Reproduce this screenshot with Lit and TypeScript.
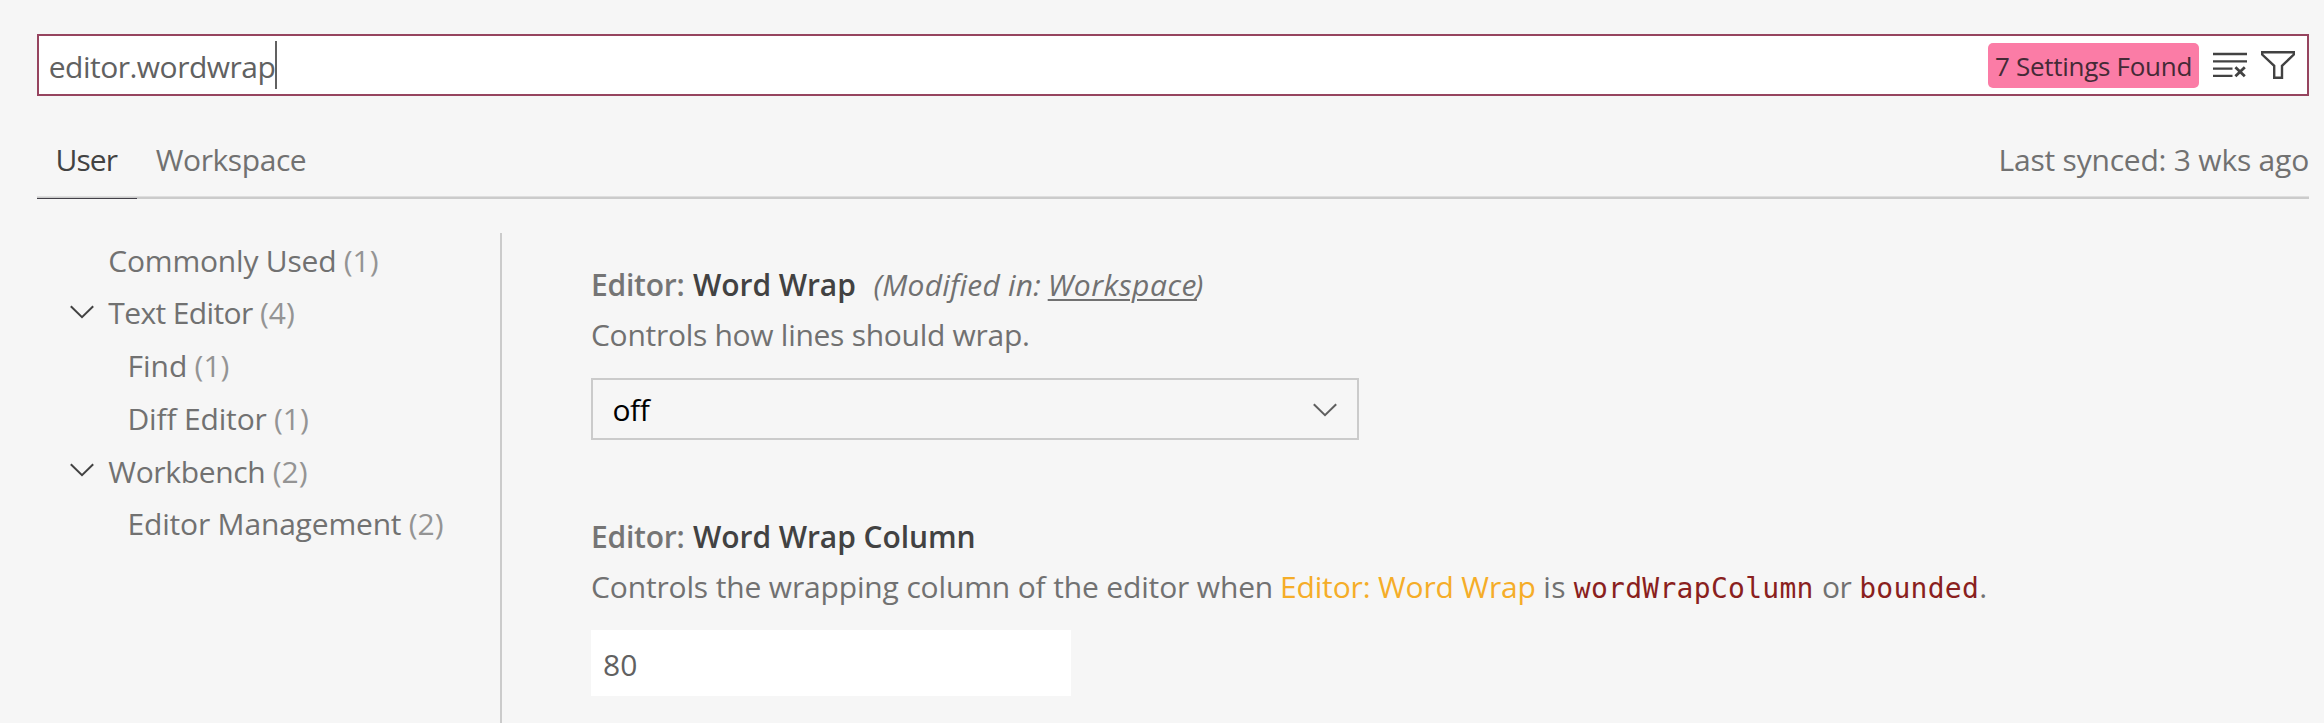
import { LitElement, html, css } from 'lit';
import { customElement, property } from 'lit/decorators.js';

interface TreeNode {
  label: string;
  count: number;
  level: number;
  expanded?: boolean;
  tracking: number;
}

const TREE: TreeNode[] = [
  { label: 'Commonly Used', count: 1, level: 0, tracking: -0.2 },
  { label: 'Text Editor', count: 4, level: 0, expanded: true, tracking: -0.62 },
  { label: 'Find', count: 1, level: 1, tracking: 0 },
  { label: 'Diff Editor', count: 1, level: 1, tracking: -0.16 },
  { label: 'Workbench', count: 2, level: 0, expanded: true, tracking: -0.34 },
  { label: 'Editor Management', count: 2, level: 1, tracking: -0.18 },
];

const chevron = html`<svg class="chevron" width="24" height="14" viewBox="0 0 24 14" fill="none">
  <path d="M0.8 1.2 L12 12.2 L23.2 1.2" stroke="currentColor" stroke-width="2" />
</svg>`;

@customElement('settings-search')
export class SettingsSearch extends LitElement {
  @property() query = '';
  @property({ type: Number }) found = 0;

  static styles = css`
    :host { display: block; }
    .box {
      display: flex;
      align-items: center;
      box-sizing: border-box;
      height: 62px;
      border: 2px solid #96445f;
      background: #fff;
      padding: 0 12px 0 9.7px;
    }
    .query { color: #616161; letter-spacing: -0.5px; padding-top: 4px; line-height: 54px; }
    .caret { width: 2px; height: 48px; background: #616161; margin-left: -0.8px; }
    .badge {
      margin-left: auto;
      box-sizing: border-box;
      width: 211px;
      height: 45px;
      padding-left: 7px;
      border-radius: 5px;
      background: #fb7ca6;
      color: #452a36;
      font-size: 26px;
      line-height: 47px;
      letter-spacing: -0.29px;
      white-space: nowrap;
    }
    .clear { margin-left: 14px; }
    .filter { margin-left: 14px; }
    svg { display: block; color: #424242; flex: none; }
  `;

  render() {
    return html`<div class="box">
      <span class="query">${this.query}</span><span class="caret"></span>
      <span class="badge">${this.found} Settings Found</span>
      <svg class="clear" width="34" height="26" viewBox="0 0 34 26" fill="none" stroke="currentColor" stroke-width="2.4">
        <path d="M0 2H34M0 9.4H34M0 16.6H19.5M0 23.9H19.5" />
        <path d="M22.4 15.2L31.8 24.2M31.8 15.2L22.4 24.2" stroke-width="2.8" />
      </svg>
      <svg class="filter" width="34" height="28" viewBox="0 0 34 28" fill="none" stroke="currentColor" stroke-width="2.4">
        <path d="M1.2 1.2H32.8V3.6L21 14.8V26.8H13.2V14.8L1.2 3.6Z" />
      </svg>
    </div>`;
  }
}

@customElement('settings-toc')
export class SettingsToc extends LitElement {
  static styles = css`
    :host { display: block; }
    .row { display: flex; height: 52.7px; line-height: 52.7px; white-space: nowrap; color: #717171; }
    .twistie { width: 38.3px; flex: none; display: flex; align-items: center; color: #424242; }
    .twistie svg { margin-top: -3px; }
    .indent { width: 19.2px; flex: none; }
    .count { color: #949494; margin-left: 7.3px; }
  `;

  render() {
    return TREE.map(
      (n) => html`<div class="row">
        <span class="twistie">${n.expanded ? chevron : ''}</span>
        ${n.level ? html`<span class="indent"></span>` : ''}
        <span style="letter-spacing:${n.tracking}px">${n.label}</span>
        <span class="count">(${n.count})</span>
      </div>`,
    );
  }
}

@customElement('app-root')
export class AppRoot extends LitElement {
  static styles = css`
    :host {
      display: block;
      box-sizing: border-box;
      height: 723px;
      overflow: hidden;
      background: #f6f6f6;
      color: #717171;
      font: 30px 'Open Sans', 'Noto Sans', sans-serif;
      padding: 34px 15px 0 37px;
    }
    .tabs {
      display: flex;
      box-sizing: border-box;
      height: 83px;
      margin-top: 20px;
      line-height: 50px;
      border-bottom: 2px solid #cbcbcb;
      box-shadow: inset 0 -1px #dedede;
    }
    .tab { box-sizing: border-box; height: 83px; padding-top: 19px; white-space: nowrap; }
    .user { width: 100px; padding-left: 18.5px; color: #424242; letter-spacing: -0.9px; border-bottom: 1px solid #424048; }
    .workspace { padding-left: 18.8px; letter-spacing: -0.43px; }
    .synced { margin-left: auto; padding-right: 0; letter-spacing: -0.21px; }
    .body { display: flex; margin-top: 34px; height: 490px; }
    .toc { width: 430px; flex: none; padding: 1.8px 0 0 33px; border-right: 2px solid #cbcbcb; }
    .settings { padding: 27px 0 0 89px; }
    .setting { height: 252px; }
    .line { display: flex; align-items: baseline; height: 50px; line-height: 50px; white-space: pre; }
    .category { font-weight: 600; width: 102px; color: #757575; letter-spacing: -0.22px; }
    .name { font-weight: 600; color: #424242; letter-spacing: -0.08px; }
    .name-short { width: 180.5px; }
    .modified { font-style: italic; width: 174.2px; letter-spacing: 0.21px; }
    .scope { font-style: italic; letter-spacing: 0.5px; width: 147px; text-decoration: underline; text-decoration-thickness: 2px; text-underline-offset: 3px; }
    .paren { font-style: italic; }
    .short { letter-spacing: -0.28px; }
    .lead { width: 689px; letter-spacing: -0.15px; }
    .link { color: #f5ad28; width: 263.2px; letter-spacing: -0.16px; }
    .is { width: 30.6px; letter-spacing: 0.4px; }
    .or { width: 37.2px; letter-spacing: -0.5px; }
    .code { font-family: 'DejaVu Sans Mono', monospace; font-size: 28px; line-height: 40px; color: #8a1f20; letter-spacing: 0.28px; }
    .code-a { width: 248.2px; }
    .code-b { width: 120px; }
    .select {
      display: flex;
      align-items: center;
      justify-content: space-between;
      box-sizing: border-box;
      width: 768px;
      height: 62px;
      margin-top: 17.5px;
      padding: 0 20px 0 19.5px;
      border: 2px solid #cbcbcb;
      color: #000;
      letter-spacing: -0.5px;
    }
    .select svg { color: #5f5f5f; margin-top: 2px; }
    .select .value { padding-top: 2px; }
    .number { box-sizing: border-box; width: 480px; height: 66px; margin-top: 17.5px; padding: 2px 0 0 12px; line-height: 65px; background: #fff; color: #616161; }
  `;

  render() {
    return html`
      <settings-search query="editor.wordwrap" found="7"></settings-search>
      <div class="tabs">
        <span class="tab user">User</span>
        <span class="tab workspace">Workspace</span>
        <span class="tab synced">Last synced: 3 wks ago</span>
      </div>
      <div class="body">
        <settings-toc class="toc"></settings-toc>
        <div class="settings">
          <div class="setting">
            <div class="line"><span class="category">Editor:</span><span class="name name-short">Word Wrap</span><span class="modified">(Modified in:</span><span class="scope">Workspace</span><span class="paren">)</span></div>
            <div class="line short">Controls how lines should wrap.</div>
            <div class="select"><span class="value">off</span>${chevron}</div>
          </div>
          <div class="setting">
            <div class="line"><span class="category">Editor:</span><span class="name">Word Wrap Column</span></div>
            <div class="line"><span class="lead">Controls the wrapping column of the editor when</span><span class="link">Editor: Word Wrap</span><span class="is">is</span><span class="code code-a">wordWrapColumn</span><span class="or">or</span><span class="code code-b">bounded</span><span>.</span></div>
            <div class="number">80</div>
          </div>
        </div>
      </div>
    `;
  }
}
